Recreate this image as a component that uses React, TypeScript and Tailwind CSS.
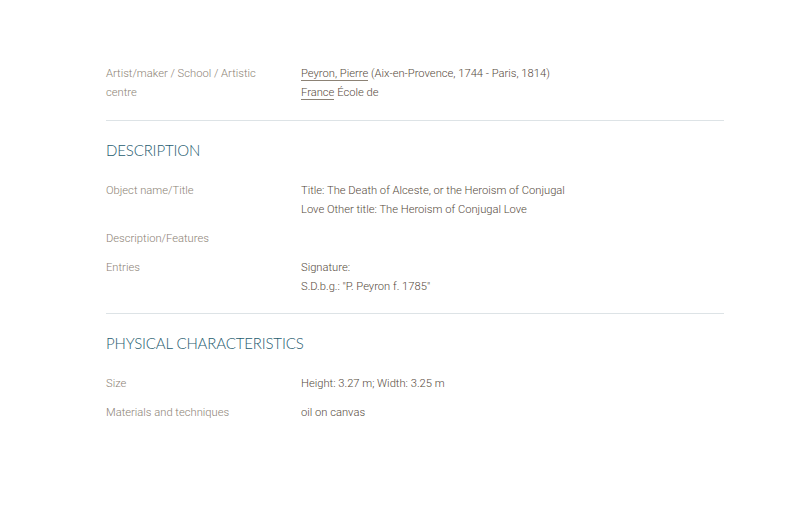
import React from "react";

const label = "text-[11.2px] leading-[19px] text-[#8c8275] font-light";
const value = "text-[11.2px] leading-[19px] text-[#564a3c] font-light";

function Row({ l, children }: { l: string; children?: React.ReactNode }) {
  return (
    <div className="flex">
      <div className={`w-[175px] mr-[20px] ${label}`}>{l}</div>
      <div className={`w-[272px] ${value}`}>{children}</div>
    </div>
  );
}

function Heading({ children }: { children: React.ReactNode }) {
  return (
    <h2
      className="text-[15px] leading-[20px] text-[#1f5d70] uppercase font-light"
      style={{ fontFamily: "Lato, 'Open Sans', sans-serif", letterSpacing: "-0.15px" }}
    >
      {children}
    </h2>
  );
}

function Section({ title, top, children }: { title: string; top: string; children: React.ReactNode }) {
  return (
    <div className={`flex flex-col pt-[19px] border-t border-[#dde3e6] ${top}`}>
      <Heading>{title}</Heading>
      <div className="flex flex-col gap-[10px] pt-[21px]">{children}</div>
    </div>
  );
}

export default function App() {
  return (
    <div
      className="w-[800px] h-[517px] bg-white"
      style={{ fontFamily: "Roboto, 'Liberation Sans', sans-serif" }}
    >
      <div className="ml-[106px] w-[618px] pt-[64px] flex flex-col">
        <Row l="Artist/maker / School / Artistic centre">
          <span className="border-b border-[#8c8275]">Peyron, Pierre</span> (Aix-en-Provence, 1744 - Paris, 1814){" "}
          <span className="border-b border-[#8c8275]">France</span> École de
        </Row>
        <Section title="Description" top="mt-[18px]">
          <Row l="Object name/Title">
            Title: The Death of Alceste, or the Heroism of Conjugal Love Other title: The Heroism of Conjugal Love
          </Row>
          <Row l="Description/Features"></Row>
          <Row l="Entries">
            Signature:
            <br />
            S.D.b.g.: "P. Peyron f. 1785"
          </Row>
        </Section>
        <Section title="Physical characteristics" top="mt-[17px]">
          <Row l="Size">Height: 3.27 m; Width: 3.25 m</Row>
          <Row l="Materials and techniques">oil on canvas</Row>
        </Section>
      </div>
    </div>
  );
}
